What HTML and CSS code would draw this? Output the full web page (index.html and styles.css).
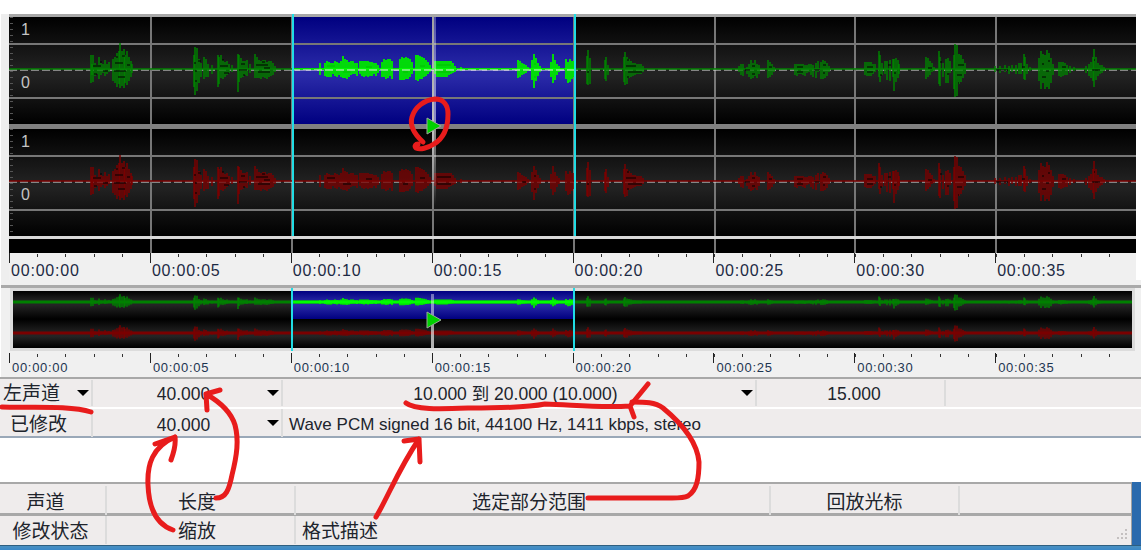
FILE: index.html
```html
<!doctype html>
<html lang="zh">
<head>
    <meta charset="UTF-8">
    <title>音频属性</title>
    <link rel="stylesheet" href="styles.css">
</head>
<body>

<svg class="defs" width="0" height="0">
    <defs>
        <clipPath id="sel-clip"><rect x="292" y="-60" width="282" height="120"/></clipPath>
        <g id="wave">
            <path d="M91-14V14M92-5V6M93-14V13M95-6V7M97-4V5M99-12V10M101-6V6M103-5V4M105-9V7M107-5V5M109-7V3
                M113-10V12M115-12V14M117-16V18M119-18V15M120-26V19M122-18V17M124-20V19M125-14V14M127-18V16M129-12V12M131-8V8M132-5V4
                M194-14V18M195-22V26M197-21V22M199-10V14M201-6V8M204-12V10M206-10V8M208-5V8M212-4V5
                M218-14V18M219-12V15M221-14V9M223-9V10M225-7V8M227-8V6M229-5V4M232-4V3
                M238-15V23M239-14V13M241-11V9M243-8V8M245-8V6M247-9V7M250-5V4
                M255-15V9M257-12V9M259-9V9M261-8V10M263-9V8M265-9V9M267-7V10M269-8V8M271-8V7M273-6V6M275-3V3
                M320-6V6M325-6V7M327-8V8M329-7V8M331-6V8M333-6V5M335-8V7M337-7V8M339-6V6M341-8V8M343-13V9M345-10V9M347-9V10M349-7V8M351-8V6M353-8V5M355-6V5M357-6V7
                M360-8V5M362-8V7M364-8V8M366-8V7M368-8V8M370-7V7M372-7V7M374-6V5M376-6V7M378-4V4
                M382-7V8M384-10V8M386-9V10M388-10V9M390-10V7M392-8V10
                M400-10V11M402-12V11M404-11V11M406-12V10M408-11V10M410-10V8M412-7V5
                M416-14V11M418-14V12M420-13V10M422-12V10M424-11V8M426-9V7M428-7V5M430-4V3
                M435-8V5M437-8V8M439-8V8M441-8V8M443-8V8M445-8V8M447-8V8M449-8V6M451-8V5M453-6V4M455-3V3M461-2V2
                M518-9V9M520-8V8M522-6V6M524-5V5M526-4V4M528-2V2M532-9V11M534-15V19M536-11V12M538-6V7M540-3V3
                M551-7V8M553-15V14M555-9V11M557-5V6M559-3V3M566-10V10M568-7V14M570-10V13M572-8V10M574-8V8
                M587-13V15M588-19V16M590-11V15M605-9V10M606-12V12M608-4V6
                M624-12V13M625-17V16M627-12V15M629-10V9M631-8V8M633-6V7M635-6V6M637-5V5M639-5V5M641-5V5M643-3V3
                M739-3V3M741-5V6M743-5V7M747-2V5M749-5V8M751-9V10M753-6V9M755-9V7M757-5V9M759-4V5M768-9V9M770-7V8M772-5V6M774-2V3
                M795-5V6M797-5V7M799-5V5M801-5V5M803-5V6M805-4V7M807-4V4M809-5V3M811-5V6M813-4V8M816-6V9M818-8V3M821-7V10M823-9V10M825-8V9M827-6V7M829-3V3
                M865-7V6M867-7V7M869-7V7M871-7V7M873-5V5M875-5V3M879-18V8M880-14V13M882-6V6M885-8V5M887-8V11M890-9V12M893-10V8M894-10V22M896-11V13M898-9V9M899-5V5
                M926-12V10M928-11V8M930-8V6M932-6V3M934-2V2M939-18V15M940-12V17M943-6V8M946-10V14M948-11V14M950-8V4
                M954-14V20M955-25V28M957-24V27M959-15V15M961-14V13M963-10V9M965-6V5
                M995-3V3M1000-3V4M1005-4V3M1009-3V5M1012-4V3M1016-4V5M1019-6V5M1021-6V5M1024-15V10M1025-12V11M1027-5V5M1030-2V2
                M1039-11V12M1041-18V20M1043-15V14M1045-14V20M1047-19V18M1049-16V20M1051-11V14M1053-5V6
                M1059-7V7M1061-7V8M1063-7V7M1065-6V6M1067-4V6M1070-3V4M1074-2V2
                M1086-3V4M1089-5V7M1091-7V9M1093-12V12M1094-20V18M1096-12V11M1098-6V7M1100-4V5M1102-4V4M1104-2V2"/>
        </g>
        <path id="holes" d="M93-3h8M103 2h5M94 5h3M100-7h2M115-6h8M114 2h12M118 8h7M116-12h2M122-13h3M127-4h3M195 2h2M198-8h3M194-6h2M195 12h2M220-3h8M224 4h5M222-9h2M239 1h8M241-5h4M243 6h2M256-4h12M258 3h12M264-1h6M262-7h3M327-3h8M343 3h8M366-2h6M403 3h5M420-3h5M437-4h14M437 3h14M522 1h4M534-5h2M534 8h2M587 3h2M626-3h10M628 3h14M627 8h2M627-9h2M745 1h5M752-3h3M752 5h3M769-2h3M797-2h6M797 3h6M814 1h6M823-4h3M823 4h2M867-2h6M867 3h6M880 6h2M888-4h3M894 4h2M928-1h4M940-7h2M947 5h2M958-4h6M957 6h5M958 14h1M996 1h12M1022-2h3M1042-5h2M1046 2h3M1042 8h4M1048-8h2M1062-2h4M1092 1h8M1094-9h1"/>
    </defs>
</svg>

<div class="wave-panel">
    <div class="tracks">
        <div class="track track-left">
            <span class="scale scale-1">1</span>
            <span class="scale scale-0">0</span>
            <svg class="wave wave-green" viewBox="9 -52 1127 107" width="1127" height="107">
                <line class="zero" x1="9" y1="1" x2="1136" y2="1"/>
                <line class="base" x1="9" y1="0" x2="1136" y2="0"/>
                <use href="#wave"/>
                <use href="#holes" class="dark"/>
                <g clip-path="url(#sel-clip)">
                    <line class="base bright" x1="292" y1="0" x2="574" y2="0"/>
                    <use href="#wave" class="bright"/>
                    <line class="zero" x1="292" y1="1" x2="574" y2="1"/>
                </g>
            </svg>
        </div>
        <div class="track-gap"></div>
        <div class="track track-right">
            <span class="scale scale-1">1</span>
            <span class="scale scale-0">0</span>
            <svg class="wave wave-red" viewBox="9 -52 1127 107" width="1127" height="107">
                <line class="zero" x1="9" y1="1" x2="1136" y2="1"/>
                <line class="base" x1="9" y1="0" x2="1136" y2="0"/>
                <use href="#wave"/>
                <use href="#holes" class="dark"/>
            </svg>
        </div>
        <i class="marker marker-a"></i>
        <i class="marker marker-b"></i>
        <i class="cursor"></i>
        <svg class="playhead" width="16" height="18" viewBox="0 0 16 18"><path d="M1 1L15 9L1 17Z" fill="#00d000" stroke="#9aa89a"/></svg>
    </div>
    <div class="strip"></div>
    <div class="ruler">
        <span>00:00:00</span><span>00:00:05</span><span>00:00:10</span><span>00:00:15</span>
        <span>00:00:20</span><span>00:00:25</span><span>00:00:30</span><span>00:00:35</span>
    </div>
</div>

<div class="overview-panel">
    <div class="overview">
        <svg class="wave" viewBox="13 0 1119 57" width="1119" height="57">
            <clipPath id="ov-clip"><rect x="292" y="0" width="282" height="28"/></clipPath>
            <line class="ov-line ov-green" x1="13" y1="11" x2="1132" y2="11"/>
            <use href="#wave" class="ov-green" transform="translate(0 11) scale(1 .3)"/>
            <g clip-path="url(#ov-clip)">
                <line class="ov-line ov-bright" x1="292" y1="11" x2="574" y2="11"/>
                <use href="#wave" class="ov-bright" transform="translate(0 11) scale(1 .3)"/>
            </g>
            <line class="ov-line ov-red" x1="13" y1="42" x2="1132" y2="42"/>
            <use href="#wave" class="ov-red" transform="translate(0 42) scale(1 .3)"/>
        </svg>
        <i class="ov-marker ov-marker-a"></i>
        <i class="ov-marker ov-marker-b"></i>
        <i class="ov-cursor"></i>
        <svg class="ov-playhead" width="16" height="18" viewBox="0 0 16 18"><path d="M1 1L15 9L1 17Z" fill="#00d000" stroke="#9aa89a"/></svg>
    </div>
    <div class="ruler ruler-small">
        <span>00:00:00</span><span>00:00:05</span><span>00:00:10</span><span>00:00:15</span>
        <span>00:00:20</span><span>00:00:25</span><span>00:00:30</span><span>00:00:35</span>
    </div>
</div>

<div class="status status-top">
    <div class="row row-five">
        <div class="cell cell-start"><span class="cell-text">左声道</span><b class="arrow"></b></div>
        <div class="cell"><span class="cell-text cell-num">40.000</span><b class="arrow"></b></div>
        <div class="cell"><span class="cell-text cell-num">10.000 到 20.000 (10.000)</span><b class="arrow"></b></div>
        <div class="cell"><span class="cell-text cell-num">15.000</span></div>
        <div class="cell cell-last"></div>
    </div>
    <div class="row row-three">
        <div class="cell"><span class="cell-text cell-name">已修改</span></div>
        <div class="cell"><span class="cell-text cell-num">40.000</span><b class="arrow"></b></div>
        <div class="cell cell-last"><span class="cell-text cell-desc">Wave PCM signed 16 bit, 44100 Hz, 1411 kbps, stereo</span></div>
    </div>
</div>

<div class="blank"></div>

<div class="bottom">
    <div class="status status-legend">
        <div class="row row-five">
            <div class="cell"><span class="cell-text cell-name">声道</span></div>
            <div class="cell"><span class="cell-text cell-shift">长度</span></div>
            <div class="cell"><span class="cell-text cell-shift">选定部分范围</span></div>
            <div class="cell"><span class="cell-text">回放光标</span></div>
            <div class="cell cell-last"></div>
        </div>
        <div class="row row-three">
            <div class="cell"><span class="cell-text cell-tight">修改状态</span></div>
            <div class="cell"><span class="cell-text cell-shift">缩放</span></div>
            <div class="cell cell-last"><span class="cell-text cell-desc">格式描述</span>
                <svg class="grip" width="12" height="12" viewBox="0 0 12 12"><path d="M9 1h2v2H9zM5 5h2v2H5zM9 5h2v2H9zM1 9h2v2H1zM5 9h2v2H5zM9 9h2v2H9z" fill="#c4c0c0"/></svg>
            </div>
        </div>
    </div>
    <div class="win-edge"></div>
</div>
<div class="win-bottom"></div>

<svg class="notes" width="1141" height="550" viewBox="0 0 1141 550">
    <path d="M423 142C413 133 410 124 412 117C415 107 424 100 435 99C444 99 448 106 448 114C448 127 444 138 434 144C428 148 420 150 416 148C414 146 416 144 418 144"/>
    <path d="M2 407C30 408 70 405 91 412"/>
    <path d="M216 498C226 498 229 490 232 475C237 455 239 440 235 425C231 412 220 402 206 394M206 394L220 390M206 394L207 410"/>
    <path d="M173 530C158 525 149 510 148 485C147 465 152 447 175 437M175 437L155 444M175 437C176 445 174 452 171 460"/>
    <path d="M376 517C388 497 398 470 419 439M419 439L404 441M419 439L420 462"/>
    <path d="M406 403C415 410 440 409 470 408C510 408 530 407 545 404C575 405 600 408 630 406M630 406L648 384M630 406L634 417"/>
    <path d="M632 402C645 402 655 402 663 408C680 422 697 440 699 462C699 478 697 490 688 496C684 498 680 498 672 498L588 498"/>
</svg>

</body>
</html>
```

FILE: styles.css
```css
*{
    margin: 0;
    padding: 0;
    box-sizing: border-box;
}
body{
    position: relative;
    width: 1141px;
    height: 550px;
    overflow: hidden;
    background: #fff;
    padding-top: 14px;
    font-family: "Liberation Sans", "Noto Sans CJK SC", sans-serif;
    color: #20242c;
}
.defs{
    position: absolute;
}
.wave-panel{
    height: 266px;
    margin-left: 1px;
    padding-left: 8px;
    padding-right: 5px;
    background: linear-gradient(90deg, #eee 0 8px, #fff 8px);
}

/* tracks */
.tracks{
    position: relative;
    border-top: 3px solid #a8a8a8;
    border-bottom: 3px solid #d8d8d8;
}
.track{
    position: relative;
    height: 107px;
    background:
        repeating-linear-gradient(90deg, #777 0 2px, transparent 2px 140.9px) 140.5px 0 no-repeat,
        linear-gradient(#777, #777) 0 26px / 100% 2px no-repeat,
        linear-gradient(#777, #777) 0 80px / 100% 2px no-repeat,
        linear-gradient(#000, #222 50%, #222 55%, #000);
}
.track-left{
    background:
        repeating-linear-gradient(90deg, #777 0 2px, transparent 2px 140.9px) 140.5px 0 no-repeat,
        linear-gradient(#777, #777) 0 26px / 100% 2px no-repeat,
        linear-gradient(#777, #777) 0 80px / 100% 2px no-repeat,
        linear-gradient(#000080, #2a2aa8 50%, #2a2aa8 55%, #000080) 283px 0 / 282px 100% no-repeat,
        linear-gradient(#000, #222 50%, #222 55%, #000);
}
.track::before{
    content: "";
    position: absolute;
    left: 1px;
    top: 0;
    bottom: 0;
    width: 3px;
    background: repeating-linear-gradient(#555 0 1px, transparent 1px 6px);
}
.track-gap{
    height: 5px;
    background: #808080;
}
.scale{
    position: absolute;
    left: 12px;
    font-size: 16px;
    line-height: 18px;
    color: #c4c4c4;
}
.scale-1{
    top: 4px;
}
.scale-0{
    top: 57px;
}
.wave{
    position: absolute;
    left: 0;
    top: 0;
    display: block;
}
.wave use, .wave path{
    fill: none;
    stroke-width: 1.5;
}
.wave-green{
    stroke: #008000;
}
.wave-red{
    stroke: #7a0000;
}
.wave .bright{
    stroke: #00ff00;
}
.wave .dark{
    stroke: #000;
    stroke-width: 1;
}
.wave .base{
    stroke-width: 1.5;
}
.wave .zero{
    stroke: #e8e8e8;
    stroke-width: 1;
    stroke-dasharray: 8 3;
}
.marker{
    position: absolute;
    top: -3px;
    bottom: 0;
    width: 2px;
    background: #20dce4;
}
.marker-a{
    left: 282.5px;
}
.marker-b{
    left: 564.5px;
}
.cursor{
    position: absolute;
    left: 422.5px;
    top: 0;
    bottom: 30px;
    width: 4px;
    background: linear-gradient(rgba(255,255,255,.3), rgba(255,255,255,.55) 60%, rgba(255,255,255,0));
}
.playhead{
    position: absolute;
    left: 417px;
    top: 100px;
}
.strip{
    height: 14px;
    background:
        repeating-linear-gradient(90deg, #777 0 2px, transparent 2px 140.9px) 140.5px 0 no-repeat,
        #000;
}

/* time ruler */
.ruler{
    display: flex;
    height: 27px;
    background: repeating-linear-gradient(90deg, #333 0 1px, transparent 1px 28.2px) 0 1px / 100% 3px repeat-x, #f0f0f0;
}
.ruler span{
    flex: 1;
    border-left: 1px solid #222;
    border-image: linear-gradient(#222 0 10px, transparent 10px) 1;
    padding: 9px 0 0 1px;
    font-size: 16px;
    line-height: 18px;
    letter-spacing: .8px;
    color: #1d2a44;
}

/* overview */
.overview-panel{
    height: 97px;
    margin-left: 1px;
    padding: 5px 5px 0 8px;
    background: linear-gradient(#aaa, #aaa) 0 5px / 100% 3px no-repeat, #f0f0f0;
}
.overview{
    position: relative;
    height: 63px;
    width: 1125px;
    margin: 3px 0 0 1px;
    border: 3px solid #dcdcdc;
    background:
        linear-gradient(#000080, #2a2aa8 40%, #2a2aa8 50%, #000080) 279px 0 / 282px 28px no-repeat,
        linear-gradient(#000, #242424 35%, #242424 50%, #000 100%) 0 0 / 100% 28px no-repeat,
        linear-gradient(#000, #242424 50%, #242424 60%, #000 100%) 0 28px / 100% 29px no-repeat;
}
.ov-line{
    stroke-width: 3;
}
.ov-green{
    stroke: #008000;
}
.ov-red{
    stroke: #7a0000;
}
.wave .ov-bright{
    stroke: #00ff00;
}
.ov-marker{
    position: absolute;
    top: -3px;
    bottom: -3px;
    width: 2px;
    background: #20dce4;
}
.ov-marker-a{
    left: 278px;
}
.ov-marker-b{
    left: 560px;
}
.ov-cursor{
    position: absolute;
    left: 418px;
    top: 3px;
    bottom: 0;
    width: 3px;
    background: linear-gradient(rgba(255,255,255,.4), rgba(255,255,255,.7));
}
.ov-playhead{
    position: absolute;
    left: 413px;
    top: 20px;
}
.ruler-small{
    width: 1127px;
    height: 24px;
    margin-top: 2px;
}
.ruler-small span{
    padding: 8px 0 0 2px;
    font-size: 13px;
    line-height: 14px;
    letter-spacing: .7px;
    color: #1d3550;
}

/* status bars */
.status{
    background: #efecec;
}
.status-top{
    height: 61px;
    padding-top: 1px;
    border-top: 2px solid #a8a8a8;
    border-bottom: 2px solid #9aa8b8;
}
.row{
    display: grid;
    height: 26px;
}
.row + .row{
    height: 27px;
    margin-top: 3px;
}
.status-top .row + .row{
    box-shadow: 0 -2px 0 #fff;
}
.status-top .row-five{
    grid-template-columns: 93px 190px 474px 189px 1fr;
}
.status-top .row-three{
    grid-template-columns: 93px 190px 1fr;
}
.status-legend .row-five{
    grid-template-columns: 107px 189px 475px 189px 1fr;
}
.status-legend .row-three{
    grid-template-columns: 107px 189px 1fr;
}
.cell{
    display: flex;
    align-items: center;
    border-right: 2px solid #dcdcdc;
    font-size: 17px;
    line-height: 24px;
    min-width: 0;
}
.cell-last{
    border-right: 0;
}
.cell-text{
    flex: 1;
    padding-top: 2px;
    text-align: center;
    white-space: nowrap;
}
.status-top .row + .row .cell-text{
    padding-top: 4px;
}
.cell-start .cell-text{
    text-align: left;
    padding-left: 3px;
    font-size: 19px;
}
.cell-num{
    padding-left: 7px;
    font-size: 17.5px;
}
.cell-name{
    padding-right: 14px;
    font-size: 19px;
}
.cell-tight{
    padding-right: 4px;
}
.cell-shift{
    padding-right: 7px;
}
.cell-desc{
    text-align: left;
    padding-left: 6px;
}
.arrow{
    flex: none;
    width: 0;
    height: 0;
    margin-right: 2px;
    border-left: 6px solid transparent;
    border-right: 6px solid transparent;
    border-top: 6px solid #000;
}

/* empty area and window bottom */
.blank{
    height: 44px;
}
.bottom{
    display: flex;
    height: 63px;
}
.status-legend{
    width: 1132px;
    padding-top: 2px;
    border-top: 2px solid #a8a8a8;
    border-right: 1px solid #a0a0a0;
}
.status-legend .row + .row{
    margin-top: 4px;
    box-shadow: 0 -3px 0 #a8a8a8;
}
.status-legend .cell{
    font-size: 19px;
}
.status-legend .cell-text{
    padding-top: 5px;
}
.status-legend .row + .row .cell-text{
    padding-top: 4px;
}
.grip{
    flex: none;
    margin: 8px 3px 0 0;
}
.win-edge{
    flex: 1;
    background: #2a6aad;
}
.win-bottom{
    height: 5px;
    border-top: 1px solid #2f5f80;
    background: linear-gradient(#4a90c0, #3a88c8);
}

/* hand drawn notes over the screenshot */
.notes{
    position: absolute;
    left: 0;
    top: 0;
    fill: none;
    stroke: #e81c1c;
    stroke-width: 5;
    stroke-linecap: round;
    stroke-linejoin: round;
}
```
